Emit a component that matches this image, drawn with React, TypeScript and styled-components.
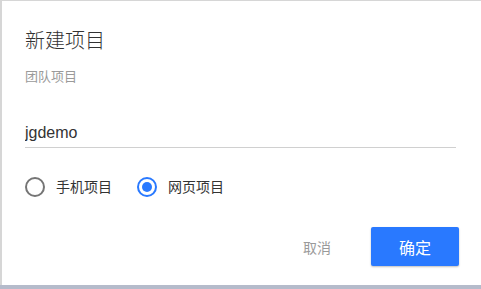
import React, { FC, useState } from "react";
import styled, { createGlobalStyle } from "styled-components";

const GlobalStyle = createGlobalStyle`
  html, body {
    margin: 0;
    padding: 0;
    background: #b5bbcb;
    font-family: "Liberation Sans", "Noto Sans CJK SC", sans-serif;
  }
  * {
    box-sizing: border-box;
  }
`;

const Backdrop = styled.div`
  width: 481px;
  height: 285px;
  padding: 1px 0 0 2px;
  background: #d6d6d6;
`;

const Dialog = styled.div`
  height: 284px;
  background: #ffffff;
  padding: 30px 22px 0 23px;
  display: flex;
  flex-direction: column;
`;

const Title = styled.h2`
  margin: 0;
  font-size: 20px;
  line-height: 20px;
  font-weight: 300;
  color: #333333;
`;

const Subtitle = styled.div`
  margin-top: 19px;
  font-size: 13px;
  line-height: 13px;
  color: #9a9a9a;
`;

const NameInput = styled.input`
  margin: 35px 3px 0 0;
  height: 30px;
  padding: 0;
  border: 0;
  border-bottom: 1px solid #d0d0d0;
  outline: none;
  font-family: "Liberation Sans", "Noto Sans CJK SC", sans-serif;
  font-size: 16px;
  color: #333333;
  background: transparent;
`;

const RadioGroup = styled.div`
  margin-top: 29px;
  display: flex;
  align-items: center;
  gap: 25px;
`;

const RadioLabel = styled.label`
  display: flex;
  align-items: center;
  gap: 11px;
  font-size: 14px;
  line-height: 20px;
  color: #333333;
  cursor: pointer;
`;

const RadioCircle = styled.span<{ checked: boolean }>`
  width: 20px;
  height: 20px;
  border-radius: 50%;
  border: 2px solid ${({ checked }) => (checked ? "#2979ff" : "#757575")};
  display: flex;
  align-items: center;
  justify-content: center;
  &::after {
    content: "";
    width: 10px;
    height: 10px;
    border-radius: 50%;
    background: #2979ff;
    display: ${({ checked }) => (checked ? "block" : "none")};
  }
`;

const Actions = styled.div`
  margin-top: 30px;
  display: flex;
  justify-content: flex-end;
  gap: 10px;
`;

const Button = styled.button<{ primary?: boolean }>`
  width: 88px;
  height: 39px;
  border: 0;
  border-radius: 2px;
  font-family: "Liberation Sans", "Noto Sans CJK SC", sans-serif;
  font-size: ${({ primary }) => (primary ? "16px" : "14px")};
  color: ${({ primary }) => (primary ? "#ffffff" : "#9a9a9a")};
  background: ${({ primary }) => (primary ? "#2979ff" : "transparent")};
  box-shadow: ${({ primary }) =>
    primary ? "0 1px 2px rgba(0, 0, 0, 0.25)" : "none"};
  cursor: pointer;
`;

const options = ["手机项目", "网页项目"];

const App: FC = () => {
  const [selected, setSelected] = useState(1);

  return (
    <>
      <GlobalStyle />
      <Backdrop>
        <Dialog>
          <Title>新建项目</Title>
          <Subtitle>团队项目</Subtitle>
          <NameInput defaultValue="jgdemo" />
          <RadioGroup>
            {options.map((option, index) => (
              <RadioLabel key={option} onClick={() => setSelected(index)}>
                <RadioCircle checked={selected === index} />
                {option}
              </RadioLabel>
            ))}
          </RadioGroup>
          <Actions>
            <Button>取消</Button>
            <Button primary>确定</Button>
          </Actions>
        </Dialog>
      </Backdrop>
    </>
  );
};

export default App;
